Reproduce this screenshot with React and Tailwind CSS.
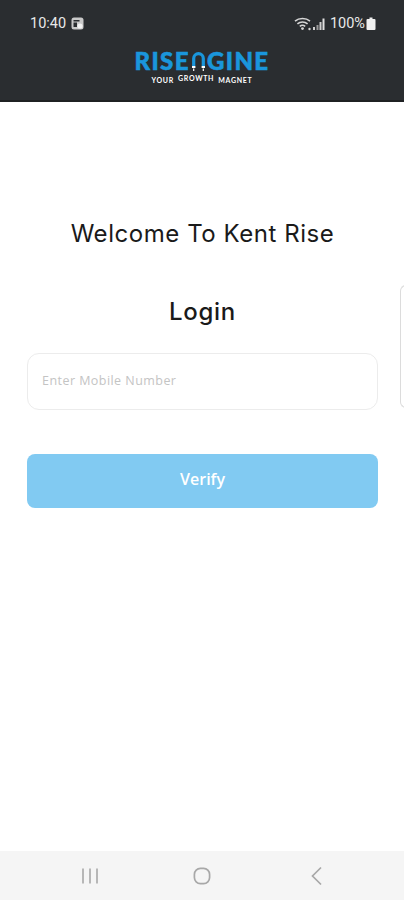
import React from 'react';

const body = { fontFamily: '"Open Sans", "Liberation Sans", sans-serif' };

// --- STATUS BAR ---
const StatusBar = () => (
    <div className="h-[46px] flex items-start justify-between pl-[30px] pr-[28px] pt-[16px] text-[#e8e8e8]" style={{ fontFamily: 'Roboto, sans-serif' }}>
        <div className="flex items-center gap-[5px]">
            <span className="text-[14.5px] leading-[15px]">10:40</span>
            <svg width="13" height="13" viewBox="0 0 13 13">
                <rect x="0.5" y="0.5" width="12" height="12" rx="2.5" fill="#c9c9c9" />
                <rect x="2.5" y="3" width="6" height="1.5" fill="#2a2d30" />
                <rect x="2.5" y="5.5" width="3.5" height="4.5" fill="#2a2d30" />
                <circle cx="9" cy="9" r="2.6" fill="#f2f2f2" />
            </svg>
        </div>
        <div className="flex items-center">
            <svg width="18" height="14" viewBox="0 0 18 14" className="mr-[1px]">
                <path d="M1 4.2 C5 0.6 12 0.6 16 4.2 M3.4 6.8 C6.3 4.3 10.7 4.3 13.6 6.8 M5.8 9.3 C7.4 8 9.6 8 11.2 9.3" fill="none" stroke="#d6d6d6" strokeWidth="1.6" />
                <circle cx="8.5" cy="11.6" r="1.4" fill="#d6d6d6" />
                <circle cx="15.5" cy="12" r="1.2" fill="#d6d6d6" />
            </svg>
            <svg width="12" height="14" viewBox="0 0 12 14" className="mr-[5px]">
                <rect x="0" y="10" width="2" height="3" fill="#d0d0d0" />
                <rect x="3.5" y="8" width="2" height="5" fill="#9a9a9a" />
                <rect x="6.5" y="5" width="2" height="8" fill="#d0d0d0" />
                <rect x="9.5" y="1.5" width="2" height="11.5" fill="#e0e0e0" />
            </svg>
            <span className="text-[14.5px] leading-[15px]">100%</span>
            <svg width="10" height="13" viewBox="0 0 10 13" className="ml-[1px]">
                <path d="M3.5 0.5 H6.5 V2 H8.5 Q9.5 2 9.5 3 V12 Q9.5 13 8.5 13 H1.5 Q0.5 13 0.5 12 V3 Q0.5 2 1.5 2 H3.5 Z" fill="#f0f0f0" />
            </svg>
        </div>
    </div>
);

// --- LOGO ---
const Logo = () => (
    <div className="flex flex-col items-center pt-[5px]" style={{ fontFamily: 'Lato, sans-serif' }}>
        <div className="flex items-center h-[19px] text-[#1a96dc] text-[24px] leading-[19px] font-black tracking-[1.4px] [-webkit-text-stroke:0.6px_#1a96dc]">
            <span>RISE</span>
            <svg width="15" height="20" viewBox="0 0 15 20" className="mx-[1px]">
                <path d="M2.7 15 V7.5 A4.8 4.8 0 0 1 12.3 7.5 V15" fill="none" stroke="#1a96dc" strokeWidth="3.2" />
                <rect x="1" y="15" width="3.4" height="2" fill="#ffffff" />
                <rect x="10.6" y="15" width="3.4" height="2" fill="#ffffff" />
                <rect x="2.1" y="17.5" width="1.2" height="2.5" fill="#ffffff" />
                <rect x="11.7" y="17.5" width="1.2" height="2.5" fill="#ffffff" />
            </svg>
            <span>GINE</span>
        </div>
        <div className="flex items-end h-[14px] text-white text-[7px] leading-[8px] font-bold tracking-[0.7px]">
            <span className="mr-[4px]">YOUR</span>
            <span className="mb-[2px] mr-[4px]">GROWTH</span>
            <span>MAGNET</span>
        </div>
    </div>
);

// --- MAIN LOGIN SCREEN ---
const App = () => {
    return (
        <div className="w-[404px] h-[900px] bg-white flex flex-col overflow-hidden" style={body}>
            <header className="h-[102px] shrink-0 bg-[#2a2d30] border-b-2 border-[#1f2123] overflow-hidden">
                <StatusBar />
                <Logo />
            </header>

            <main className="flex-1 flex overflow-hidden">
                {/* slide row, the next slide peeks in at the right edge */}
                <div className="w-[400px] shrink-0 pl-[27px] pr-[22px] flex flex-col items-stretch">
                    <h1 className="mt-[118px] h-[28px] text-center text-[24px] leading-[28px] text-[#1a1a1a] font-normal tracking-[0.55px] whitespace-nowrap" style={{ fontFamily: 'Inter, sans-serif' }}>
                        Welcome To Kent Rise
                    </h1>
                    <h2 className="mt-[50px] h-[28px] text-center text-[24px] leading-[28px] text-[#1a1a1a] font-medium tracking-[0.7px]" style={{ fontFamily: 'Inter, sans-serif' }}>
                        Login
                    </h2>
                    <div className="mt-[27px] h-[57px] rounded-[12px] border border-[#ececec] flex items-center pl-[14px]">
                        <span className="text-[12.5px] text-[#c4c4c4] tracking-[0.45px]">Enter Mobile Number</span>
                    </div>
                    <button className="mt-[44px] h-[54px] rounded-[8px] bg-[#81caf2] text-white text-[16px] font-semibold pb-[5px]">
                        Verify
                    </button>
                </div>
                <div className="flex-1 min-w-0">
                    <div className="mt-[183px] w-[20px] h-[123px] rounded-l-[6px] border border-r-0 border-[#dcdcdc]"></div>
                </div>
            </main>

            <nav className="h-[49px] shrink-0 bg-[#f5f5f5] flex items-center">
                <div className="flex-1 flex justify-center">
                    <svg width="20" height="18" viewBox="0 0 20 18" className="mr-[13px]">
                        <path d="M3 1.5 V16.5 M10 1.5 V16.5 M17 1.5 V16.5" stroke="#a8a8a8" strokeWidth="1.6" fill="none" />
                    </svg>
                </div>
                <svg width="20" height="18" viewBox="0 0 20 18" className="shrink-0">
                    <rect x="2.4" y="1.4" width="15.2" height="15.2" rx="6" stroke="#a8a8a8" strokeWidth="1.7" fill="none" />
                </svg>
                <div className="flex-1 flex justify-center">
                    <svg width="14" height="20" viewBox="0 0 14 20" className="ml-[18px]">
                        <path d="M11 1.5 L2.5 10 L11 18.5" stroke="#a8a8a8" strokeWidth="1.7" fill="none" />
                    </svg>
                </div>
            </nav>
        </div>
    );
};

export default App;
